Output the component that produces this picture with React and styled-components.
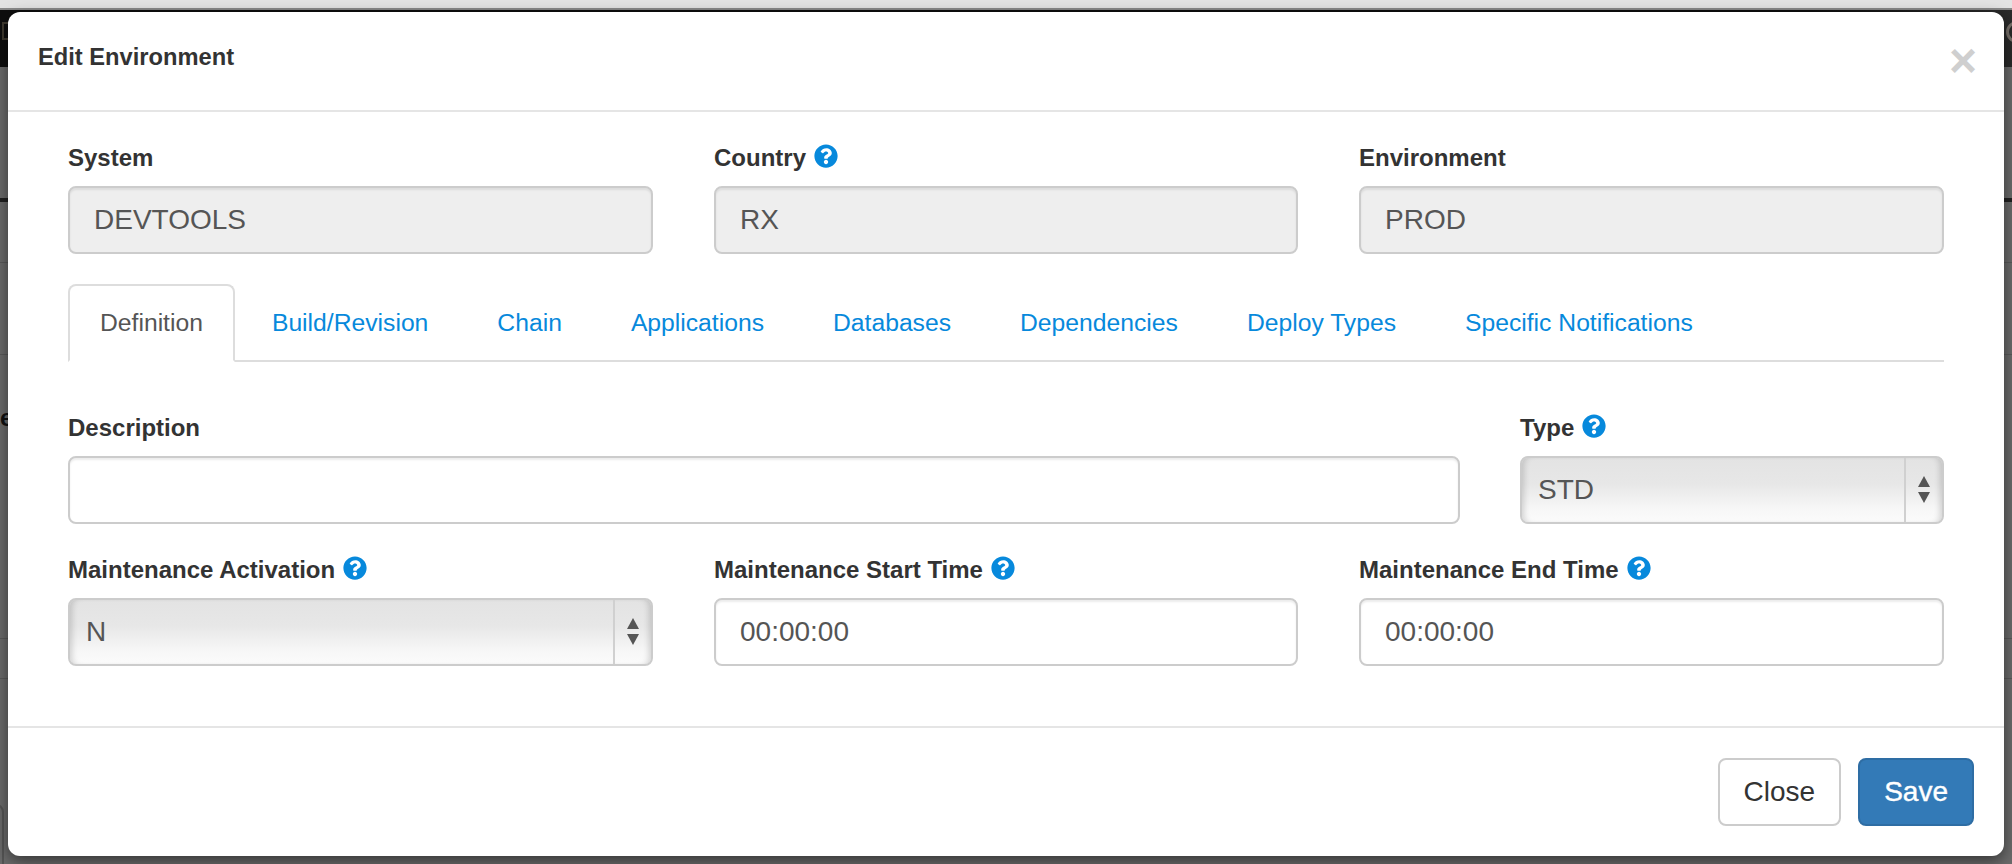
import styled, { createGlobalStyle } from "styled-components";
import { FaQuestionCircle } from "react-icons/fa";

const GlobalStyle = createGlobalStyle`
  html, body {
    margin: 0;
    padding: 0;
    background: #666;
  }
  * {
    box-sizing: border-box;
  }
`;

const Page = styled.div`
  position: relative;
  width: 2012px;
  height: 864px;
  overflow: hidden;
  background: #6b6b6b;
  font-family: "Liberation Sans", Arial, sans-serif;
`;

/* stuff behind the backdrop */
const BrowserEdge = styled.div`
  height: 10px;
  background: #e3e3e3;
  border-bottom: 2px solid #8a8a8a;
`;
const NavBar = styled.div`
  height: 57px;
  display: flex;
  justify-content: space-between;
  align-items: center;
  padding: 0 0 0 2px;
  background: linear-gradient(90deg, #0e0e0e 0%, #0e0e0e 90%, #2b2b2b 100%);
`;
const NavBox = styled.div`
  width: 24px;
  height: 18px;
  margin-top: -16px;
  border: 2px solid #3f3a30;
`;
const NavRing = styled.div`
  width: 22px;
  height: 22px;
  margin: -14px -16px 0 0;
  border: 3px solid #77706a;
  border-radius: 50%;
`;
const BackRow = styled.div`
  height: ${({ $h }) => $h}px;
  border-bottom: ${({ $line }) => ($line ? `${$line}px solid ${$line > 1 ? "#222" : "#5a5a5a"}` : "none")};
`;
const BackLabel = styled.div`
  margin: 46px 0 0 -52px;
  font-size: 24px;
  font-weight: 700;
  line-height: 34px;
  color: #111;
`;
const BackButton = styled.div`
  width: 104px;
  height: 67px;
  margin: 125px 0 0 -100px;
  border: 2px solid #555;
  border-radius: 8px;
`;
const BackCell = styled.div`
  height: 100%;
  margin-left: 43px;
  border-left: 1px solid #444;
`;

/* modal */
const Modal = styled.div`
  position: absolute;
  left: 8px;
  top: 12px;
  width: 1996px;
  height: 844px;
  display: flex;
  flex-direction: column;
  background: #fff;
  border-radius: 12px;
  box-shadow: 0 5px 15px rgba(0, 0, 0, 0.5);
`;
const Header = styled.div`
  height: 100px;
  padding: 0 30px;
  display: flex;
  align-items: center;
  justify-content: space-between;
  border-bottom: 2px solid #e5e5e5;
`;
const Title = styled.h4`
  margin: 0 0 8px;
  font-size: 23.7px;
  font-weight: 700;
  color: #333;
`;
const CloseX = styled.span`
  margin-right: -3px;
  font-size: 48px;
  font-weight: 700;
  line-height: 1;
  color: #cfcfcf;
`;
const Body = styled.div`
  flex: 1;
  padding: 29px 60px 0;
`;
const ThreeCols = styled.div`
  display: grid;
  grid-template-columns: 585px 584px 585px;
  column-gap: 61px;
  margin-top: ${({ $top }) => $top || 0}px;
`;
const WideRow = styled.div`
  display: grid;
  grid-template-columns: 1fr 424px;
  column-gap: 60px;
  margin-top: 49px;
`;
const Label = styled.label`
  display: flex;
  align-items: center;
  gap: 8px;
  height: 34px;
  margin-bottom: 11px;
  font-size: 24px;
  font-weight: 700;
  color: #333;
`;
const HelpIcon = styled(FaQuestionCircle)`
  width: 24px;
  height: 24px;
  margin-top: -4px;
  color: #0789dc;
`;
const Input = styled.input`
  display: block;
  width: 100%;
  height: 68px;
  padding: 0 24px;
  font-family: inherit;
  font-size: 28px;
  color: #555;
  background: ${({ readOnly }) => (readOnly ? "#eee" : "#fff")};
  border: 2px solid #ccc;
  border-radius: 8px;
  box-shadow: inset 0 2px 2px rgba(0, 0, 0, 0.075);
  outline: none;
`;
const Select = styled.div`
  display: flex;
  height: 68px;
  font-size: 28px;
  color: #555;
  border: 2px solid #ccc;
  border-radius: 8px;
  background: linear-gradient(180deg, #e3e3e3 0%, #e7e7e7 40%, #f7f7f7 80%, #fbfbfb 100%);
  box-shadow: inset 6px 0 6px -4px rgba(0, 0, 0, 0.16), inset -6px 0 6px -4px rgba(0, 0, 0, 0.16);
`;
const SelectValue = styled.div`
  flex: 1;
  display: flex;
  align-items: center;
  padding-left: 16px;
`;
const SelectArrows = styled.div`
  width: 38px;
  display: flex;
  align-items: center;
  justify-content: center;
  border-left: 2px solid #d0d0d0;
`;
const Tabs = styled.ul`
  display: flex;
  height: 78px;
  margin: 30px 0 0;
  padding: 0;
  list-style: none;
  border-bottom: 2px solid #ddd;
`;
const Tab = styled.li`
  height: 78px;
  margin-right: 5px;
  padding: 0 30px;
  display: flex;
  align-items: center;
  font-size: 24.7px;
  color: ${({ $active }) => ($active ? "#555" : "#0789dc")};
  background: ${({ $active }) => ($active ? "#fff" : "transparent")};
  border: 2px solid ${({ $active }) => ($active ? "#ddd" : "transparent")};
  border-bottom-color: ${({ $active }) => ($active ? "#fff" : "transparent")};
  border-radius: 8px 8px 0 0;
`;
const Footer = styled.div`
  height: 130px;
  padding: 30px;
  display: flex;
  justify-content: flex-end;
  gap: 17px;
  border-top: 2px solid #e5e5e5;
`;
const Button = styled.button`
  height: 68px;
  padding: 0 24px;
  font-family: inherit;
  font-size: 28px;
  color: ${({ $primary }) => ($primary ? "#fff" : "#333")};
  -webkit-text-stroke: ${({ $primary }) => ($primary ? "0.4px #fff" : "0")};
  background: ${({ $primary }) => ($primary ? "#337ab7" : "#fff")};
  border: 2px solid ${({ $primary }) => ($primary ? "#2e6da4" : "#ccc")};
  border-radius: 8px;
`;

const tabs = ["Definition", "Build/Revision", "Chain", "Applications", "Databases", "Dependencies", "Deploy Types", "Specific Notifications"];

function Arrows() {
  return (
    <svg width="14" height="28" viewBox="0 0 14 28">
      <path d="M7 0 L13 11 L1 11 Z" fill="#555" />
      <path d="M7 27 L13 16 L1 16 Z" fill="#555" />
    </svg>
  );
}

function Help() {
  return <HelpIcon />;
}

export default function App() {
  return (
    <Page>
      <GlobalStyle />
      <BrowserEdge />
      <NavBar>
        <NavBox />
        <NavRing />
      </NavBar>
      <BackRow $h={135} $line={4} />
      <BackRow $h={61} $line={1} />
      <BackRow $h={92} $line={1} />
      <BackRow $h={238} $line={1}>
        <BackLabel>Name</BackLabel>
      </BackRow>
      <BackRow $h={40} $line={1} />
      <BackRow $h={213} $line={1}>
        <BackButton />
      </BackRow>
      <BackRow $h={18}>
        <BackCell />
      </BackRow>

      <Modal>
        <Header>
          <Title>Edit Environment</Title>
          <CloseX>×</CloseX>
        </Header>
        <Body>
          <ThreeCols>
            <div>
              <Label>System</Label>
              <Input readOnly value="DEVTOOLS" />
            </div>
            <div>
              <Label>Country <Help /></Label>
              <Input readOnly value="RX" />
            </div>
            <div>
              <Label>Environment</Label>
              <Input readOnly value="PROD" />
            </div>
          </ThreeCols>
          <Tabs>
            {tabs.map((t, i) => (
              <Tab key={t} $active={i === 0}>{t}</Tab>
            ))}
          </Tabs>
          <WideRow>
            <div>
              <Label>Description</Label>
              <Input defaultValue="" />
            </div>
            <div>
              <Label>Type <Help /></Label>
              <Select>
                <SelectValue>STD</SelectValue>
                <SelectArrows><Arrows /></SelectArrows>
              </Select>
            </div>
          </WideRow>
          <ThreeCols $top={29}>
            <div>
              <Label>Maintenance Activation <Help /></Label>
              <Select>
                <SelectValue>N</SelectValue>
                <SelectArrows><Arrows /></SelectArrows>
              </Select>
            </div>
            <div>
              <Label>Maintenance Start Time <Help /></Label>
              <Input defaultValue="00:00:00" />
            </div>
            <div>
              <Label>Maintenance End Time <Help /></Label>
              <Input defaultValue="00:00:00" />
            </div>
          </ThreeCols>
        </Body>
        <Footer>
          <Button>Close</Button>
          <Button $primary>Save</Button>
        </Footer>
      </Modal>
    </Page>
  );
}
